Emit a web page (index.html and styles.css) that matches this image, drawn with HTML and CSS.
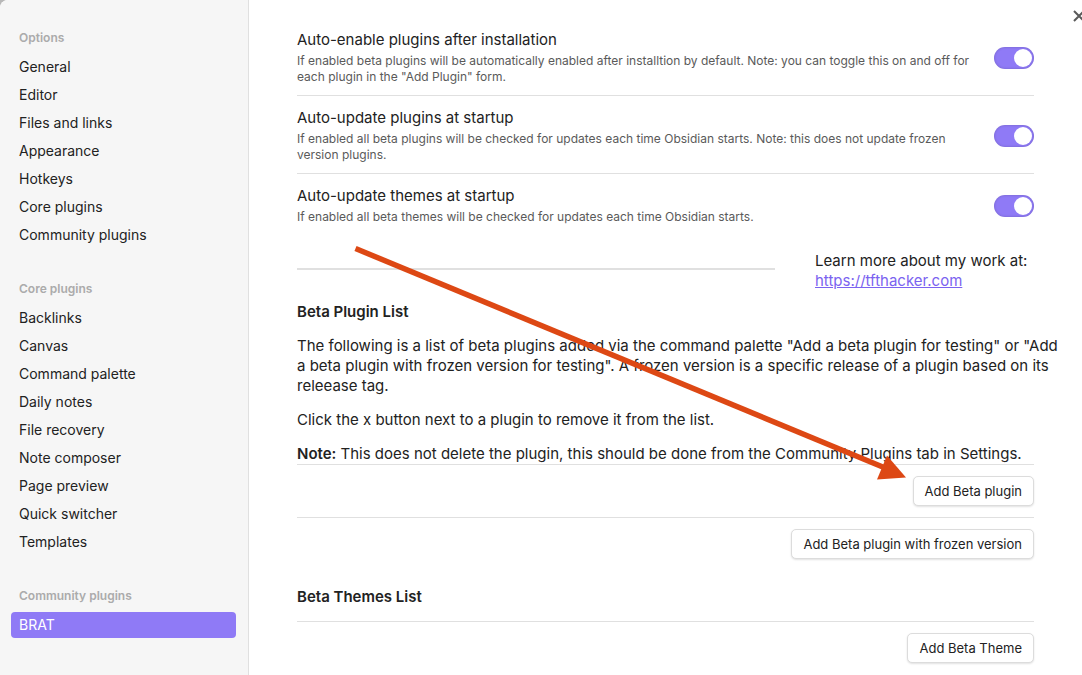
FILE: index.html
```
<!DOCTYPE html>
<html lang="en">
<head>
<meta charset="utf-8">
<title>Settings</title>
<link rel="stylesheet" href="styles.css">
</head>
<body>
<div class="modal">
  <nav class="sidebar" aria-label="Settings">
    <section class="group">
      <h2 class="group-title">Options</h2>
      <a class="tab" href="#general">General</a>
      <a class="tab" href="#editor">Editor</a>
      <a class="tab" href="#files">Files and links</a>
      <a class="tab" href="#appearance">Appearance</a>
      <a class="tab" href="#hotkeys">Hotkeys</a>
      <a class="tab" href="#core">Core plugins</a>
      <a class="tab" href="#community">Community plugins</a>
    </section>
    <section class="group">
      <h2 class="group-title">Core plugins</h2>
      <a class="tab" href="#backlinks">Backlinks</a>
      <a class="tab" href="#canvas">Canvas</a>
      <a class="tab" href="#palette">Command palette</a>
      <a class="tab" href="#daily">Daily notes</a>
      <a class="tab" href="#recovery">File recovery</a>
      <a class="tab" href="#composer">Note composer</a>
      <a class="tab" href="#preview">Page preview</a>
      <a class="tab" href="#switcher">Quick switcher</a>
      <a class="tab" href="#templates">Templates</a>
    </section>
    <section class="group">
      <h2 class="group-title">Community plugins</h2>
      <a class="tab active" href="#brat" aria-current="page">BRAT</a>
    </section>
  </nav>
  <main class="content">
    <button class="close" type="button" aria-label="Close">
      <svg width="12" height="12" viewBox="0 0 12 12"><path d="M1 1 11 11M11 1 1 11" fill="none" stroke="currentColor" stroke-width="2"/></svg>
    </button>
    <div class="setting">
      <div class="info">
        <label class="name" for="enable">Auto-enable plugins after installation</label>
        <p class="desc" id="enable-desc">If enabled beta plugins will be automatically enabled after installtion by default. Note: you can toggle this on and off for each plugin in the "Add Plugin" form.</p>
      </div>
      <input class="toggle" type="checkbox" id="enable" aria-describedby="enable-desc" checked>
    </div>
    <div class="setting">
      <div class="info">
        <label class="name" for="plugins">Auto-update plugins at startup</label>
        <p class="desc" id="plugins-desc">If enabled all beta plugins will be checked for updates each time Obsidian starts. Note: this does not update frozen version plugins.</p>
      </div>
      <input class="toggle" type="checkbox" id="plugins" aria-describedby="plugins-desc" checked>
    </div>
    <div class="setting">
      <div class="info">
        <label class="name" for="themes">Auto-update themes at startup</label>
        <p class="desc" id="themes-desc">If enabled all beta themes will be checked for updates each time Obsidian starts.</p>
      </div>
      <input class="toggle" type="checkbox" id="themes" aria-describedby="themes-desc" checked>
    </div>
    <div class="about">
      <hr class="rule">
      <div>Learn more about my work at:<br><a class="link" href="https://tfthacker.com">https://tfthacker.com</a></div>
    </div>
    <section class="list">
      <h3 class="heading">Beta Plugin List</h3>
      <p class="text intro">The following is a list of beta plugins added via the command palette "Add a beta plugin for testing" or "Add<br>a beta plugin with frozen version for testing". A frozen version is a specific release of a plugin based on its<br>releease tag.</p>
      <p class="text">Click the x button next to a plugin to remove it from the list.</p>
      <p class="text"><strong>Note:</strong> This does not delete the plugin, this should be done from the Community Plugins tab in Settings.</p>
    </section>
    <div class="action"><button class="button" type="button">Add Beta plugin</button></div>
    <div class="action"><button class="button" type="button">Add Beta plugin with frozen version</button></div>
    <section class="list themes">
      <h3 class="heading">Beta Themes List</h3>
    </section>
    <div class="action"><button class="button" type="button">Add Beta Theme</button></div>
    <svg class="arrow" width="552" height="236" viewBox="0 0 552 236" aria-hidden="true">
      <path d="M1.5 3.500 530 222.500" fill="none" stroke="#dd4814" stroke-width="5.5"/>
      <path d="M552 232.500 533 210.500 523 234.500Z" fill="#dd4814"/>
    </svg>
  </main>
</div>
</body>
</html>
```
FILE: styles.css
```
* { box-sizing: border-box; }
body {
  margin: 0;
  background: #b8b8b8;
  color: #222;
  font: 15px/20px Inter, "Liberation Sans", sans-serif;
}
h2, h3, p { margin: 0; }
.modal {
  display: flex;
  min-height: 100vh;
  overflow: hidden;
  background: #fff;
  border-top-left-radius: 8px;
}
.sidebar {
  flex: 0 0 249px;
  padding: 28px 12px 0 11px;
  background: #f6f6f6;
  border-right: 1px solid #e0e0e0;
  font-size: 14px;
}
.group { margin-bottom: 31px; }
.group:last-child { margin-bottom: 0; }
.group-title {
  padding: 0 8px;
  margin-bottom: 6px;
  color: #ababab;
  font-size: 12px;
  font-weight: 600;
  line-height: 20px;
}
.tab {
  display: block;
  margin-bottom: 2px;
  padding: 3px 8px;
  border-radius: 4px;
  color: #222;
  text-decoration: none;
}
.tab.active { background: #8f7af6; color: #fff; }
.content {
  position: relative;
  flex: 1;
  min-width: 0;
  padding: 18px 48px 0;
}
.close {
  position: absolute;
  top: 10px;
  right: -3px;
  display: flex;
  padding: 0;
  border: 0;
  background: none;
  color: #5a5a5a;
}
.setting {
  display: flex;
  align-items: center;
  gap: 16px;
  padding: 12px 0 10px;
}
.setting + .setting { border-top: 1px solid #e0e0e0; }
.info { flex: 1; }
.name { display: block; }
.desc {
  margin-top: 3px;
  color: #5a5a5a;
  font-size: 12px;
  line-height: 16px;
}
.toggle {
  appearance: none;
  display: flex;
  justify-content: flex-end;
  width: 40px;
  height: 22px;
  margin: 0;
  padding: 2px;
  border-radius: 11px;
  background: #8f7af6;
  box-shadow: inset 0 0 3px rgba(0, 0, 0, .2);
}
.toggle::before {
  content: "";
  width: 18px;
  height: 18px;
  border-radius: 50%;
  background: #fff;
}
.about {
  display: grid;
  grid-template-columns: 1fr 219px;
  align-items: center;
  gap: 40px;
  margin-top: 16px;
}
.rule {
  width: 100%;
  margin: 0 0 4px;
  border: 0;
  border-top: 2px solid #e0e0e0;
}
.link { color: #7b63f0; }
.list {
  display: flex;
  flex-direction: column;
  gap: 14px;
  margin-top: 11px;
}
.list.themes { margin: 17px 0 14px; }
.heading { font-size: 15px; font-weight: 600; }
.intro { white-space: nowrap; }
strong { font-weight: 600; }
.action {
  display: flex;
  justify-content: flex-end;
  padding: 11px 0;
  border-top: 1px solid #e0e0e0;
}
.button {
  height: 30px;
  padding: 0 11px;
  border: 1px solid #dcdcdc;
  border-radius: 5px;
  background: #fff;
  box-shadow: 0 1px 2px rgba(0, 0, 0, .12);
  color: #222;
  font: 13px/20px Inter, "Liberation Sans", sans-serif;
}
.arrow {
  position: absolute;
  top: 245px;
  left: 105px;
  pointer-events: none;
}
```
